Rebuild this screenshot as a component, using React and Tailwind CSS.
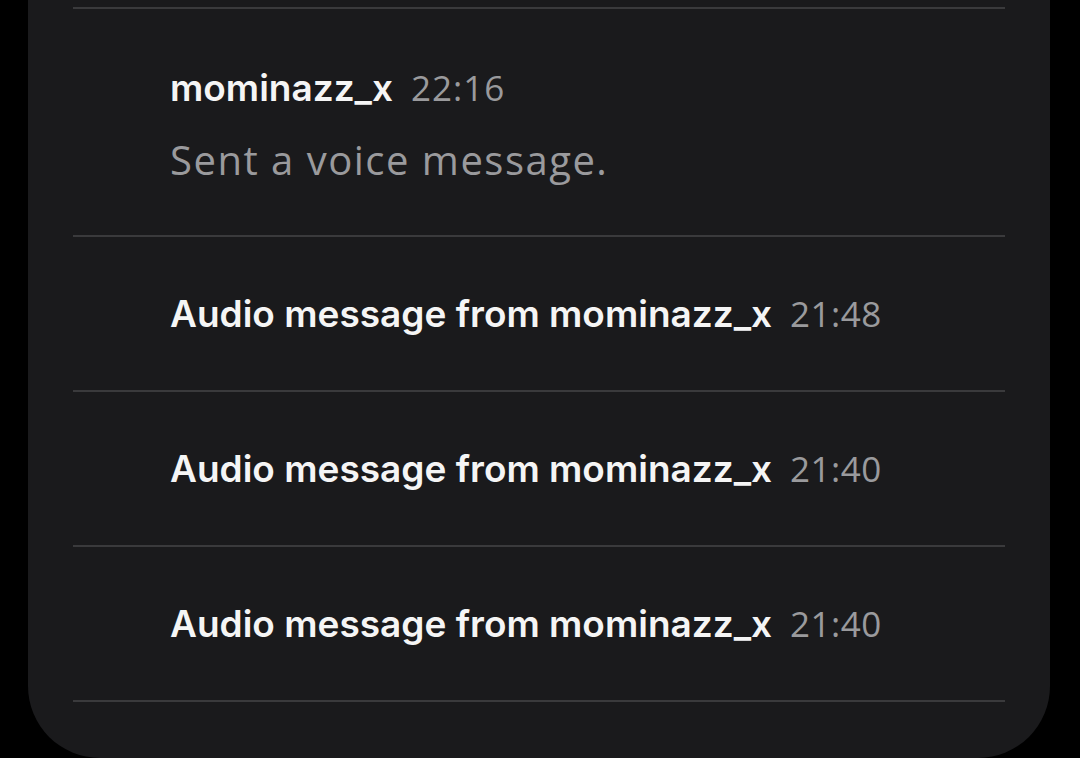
export default function App() {
  const rows = ["21:48", "21:40", "21:40"];
  return (
    <div className="w-[1080px] h-[758px] bg-black overflow-hidden pl-[28px] pr-[30px]">
      <div className="h-[758px] bg-[#1a1a1c] rounded-b-[72px] px-[45px] pt-[7px]">
        <div className="h-[2px] bg-[#3a3a3c]" />
        <div className="h-[226px] pl-[97px] pt-[60px]">
          <div className="flex items-baseline gap-[18px] leading-none">
            <span className="text-[#f5f5f5] text-[37px] font-semibold" style={{ fontFamily: "Inter, sans-serif" }}>mominazz_x</span>
            <span className="text-[#9a9a9d] text-[35px] tracking-[1px]" style={{ fontFamily: "'Open Sans', sans-serif" }}>22:16</span>
          </div>
          <div className="mt-[34px] text-[#9a9a9d] text-[40px] tracking-[1.5px] leading-none" style={{ fontFamily: "'Open Sans', sans-serif" }}>
            Sent a voice message.
          </div>
        </div>
        {rows.map((t, i) => (
          <div key={i}>
            <div className="h-[2px] bg-[#3a3a3c]" />
            <div className="h-[153px] pl-[97px] flex items-center">
              <div className="flex items-baseline gap-[18px] leading-none">
                <span className="text-[#f5f5f5] text-[37px] font-semibold" style={{ fontFamily: "Inter, sans-serif" }}>Audio message from mominazz_x</span>
                <span className="text-[#9a9a9d] text-[35px] tracking-[0.5px]" style={{ fontFamily: "'Open Sans', sans-serif" }}>{t}</span>
              </div>
            </div>
          </div>
        ))}
        <div className="h-[2px] bg-[#3a3a3c]" />
      </div>
    </div>
  );
}
